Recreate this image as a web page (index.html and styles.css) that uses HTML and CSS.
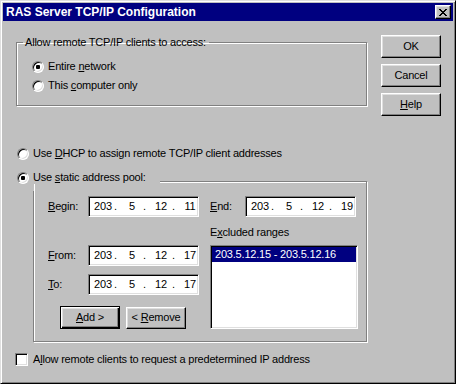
FILE: index.html
```html
<!DOCTYPE html>
<html lang="en">
<head>
    <meta charset="UTF-8">
    <title>RAS Server TCP/IP Configuration</title>
    <link rel="stylesheet" href="styles.css">
</head>
<body>
    <div class="window">
        <div class="titlebar">
            <span class="title">RAS Server TCP/IP Configuration</span>
            <span class="close">
                <svg width="8" height="7" viewBox="0 0 8 7"><path d="M0 0h2v1H0zM6 0h2v1H6zM1 1h2v1H1zM5 1h2v1H5zM2 2h4v1H2zM3 3h2v1H3zM2 4h4v1H2zM1 5h2v1H1zM5 5h2v1H5zM0 6h2v1H0zM6 6h2v1H6z" fill="#000"/></svg>
            </span>
        </div>
        <div class="content">
            <div class="main">
                <fieldset class="group">
                    <legend>Allow remote TCP/IP clients to access:</legend>
                    <label class="option"><span class="radio checked"></span><span>Entire <u>n</u>etwork</span></label>
                    <label class="option second"><span class="radio"></span><span>This <u>c</u>omputer only</span></label>
                </fieldset>

                <label class="option dhcp"><span class="radio"></span><span>Use <u>D</u>HCP to assign remote TCP/IP client addresses</span></label>

                <fieldset class="pool">
                    <legend><label class="option"><span class="radio checked"></span><span>Use <u>s</u>tatic address pool:</span></label></legend>
                    <div class="pool-left">
                        <div class="field-row">
                            <span class="field-label"><u>B</u>egin:</span>
                            <div class="ip"><span class="seg">203</span><span class="dot">.</span><span class="seg">5</span><span class="dot">.</span><span class="seg">12</span><span class="dot">.</span><span class="seg">11</span></div>
                        </div>
                        <div class="field-row from">
                            <span class="field-label"><u>F</u>rom:</span>
                            <div class="ip"><span class="seg">203</span><span class="dot">.</span><span class="seg">5</span><span class="dot">.</span><span class="seg">12</span><span class="dot">.</span><span class="seg">17</span></div>
                        </div>
                        <div class="field-row to">
                            <span class="field-label"><u>T</u>o:</span>
                            <div class="ip"><span class="seg">203</span><span class="dot">.</span><span class="seg">5</span><span class="dot">.</span><span class="seg">12</span><span class="dot">.</span><span class="seg">17</span></div>
                        </div>
                        <div class="pool-buttons">
                            <button class="btn default"><u>A</u>dd &gt;</button>
                            <button class="btn small">&lt; <u>R</u>emove</button>
                        </div>
                    </div>
                    <div class="pool-right">
                        <div class="field-row">
                            <span class="field-label end"><u>E</u>nd:</span>
                            <div class="ip"><span class="seg">203</span><span class="dot">.</span><span class="seg">5</span><span class="dot">.</span><span class="seg">12</span><span class="dot">.</span><span class="seg">19</span></div>
                        </div>
                        <div class="list-label">E<u>x</u>cluded ranges</div>
                        <div class="listbox">
                            <div class="list-item selected">203.5.12.15 - 203.5.12.16</div>
                        </div>
                    </div>
                </fieldset>

                <label class="option check-row"><span class="checkbox"></span><span>A<u>l</u>low remote clients to request a predetermined IP address</span></label>
            </div>
            <div class="buttons">
                <button class="btn">OK</button>
                <button class="btn">Cancel</button>
                <button class="btn"><u>H</u>elp</button>
            </div>
        </div>
    </div>
</body>
</html>
```

FILE: styles.css
```css
body{
    margin: 0;
    background-color: #c0c0c0;
    font-family: "Liberation Sans", Arial, sans-serif;
    font-size: 11px;
    line-height: 13px;
    letter-spacing: -0.2px;
    color: #000;
}

.window{
    width: 456px;
    height: 384px;
    box-sizing: border-box;
    background-color: #c0c0c0;
    border: 1px solid;
    border-color: #dfdfdf #000 #000 #dfdfdf;
    box-shadow: inset 1px 1px #fff, inset -1px -1px #808080;
    padding: 2px;
    display: flex;
    flex-direction: column;
}

.titlebar{
    height: 18px;
    background-color: #000080;
    color: #fff;
    font-weight: bold;
    font-size: 12px;
    letter-spacing: 0;
    display: flex;
    align-items: center;
    justify-content: space-between;
    padding: 0 2px 0 3px;
}

.close{
    width: 16px;
    height: 14px;
    box-sizing: border-box;
    background-color: #c0c0c0;
    border: 1px solid;
    border-color: #fff #000 #000 #fff;
    box-shadow: inset -1px -1px #808080, inset 1px 1px #dfdfdf;
    display: flex;
    align-items: center;
    justify-content: center;
}

.content{
    flex: 1;
    display: flex;
}

.main{
    flex: 1;
    padding-left: 13px;
}

/* group boxes */
fieldset{
    margin: 0;
    box-sizing: border-box;
    border: 1px solid #808080;
    box-shadow: inset 1px 1px #fff, 1px 1px #fff;
}

.group{
    margin-top: 15px;
    width: 351px;
    padding: 11px 0 13px 15px;
}

.group legend{
    margin-left: -9px;
    padding: 0 3px 0 2px;
}

.option{
    display: flex;
    align-items: center;
    gap: 4px;
    height: 13px;
    white-space: nowrap;
}

.option.second{
    margin-top: 6px;
}

.dhcp{
    margin: 41px 0 0 1px;
}

.radio{
    position: relative;
    width: 12px;
    height: 12px;
    box-sizing: border-box;
    border-radius: 50%;
    background-color: #fff;
    border: 1px solid;
    border-color: #808080 #fff #fff #808080;
    box-shadow: inset 1px 1px #000, inset -1px -1px #dfdfdf;
    flex: none;
}

.radio.checked::after{
    content: "";
    position: absolute;
    left: 3px;
    top: 3px;
    width: 4px;
    height: 4px;
    border-radius: 1px;
    background-color: #000;
}

.checkbox{
    width: 13px;
    height: 13px;
    box-sizing: border-box;
    background-color: #fff;
    border: 1px solid;
    border-color: #808080 #fff #fff #808080;
    box-shadow: inset 1px 1px #000, inset -1px -1px #dfdfdf;
    flex: none;
}

.check-row{
    margin: 11px 0 0 -1px;
    gap: 5px;
}

/* static address pool */
.pool{
    margin: 11px 0 0 17px;
    width: 334px;
    padding: 5px 8px 12px 14px;
    display: flex;
    gap: 11px;
}

.pool legend{
    margin-left: -31px;
    padding: 0 0 7px 0;
}

.pool legend .option{
    background-color: #c0c0c0;
    padding-right: 14px;
}

.pool-left, .pool-right{
    display: flex;
    flex-direction: column;
}

.field-row{
    display: flex;
    align-items: center;
}

.field-row.from{
    margin-top: 28px;
}

.field-row.to{
    margin-top: 8px;
}

.field-label{
    width: 40px;
}

.field-label.end{
    width: 35px;
}

.ip{
    width: 111px;
    height: 21px;
    box-sizing: border-box;
    background-color: #fff;
    border: 1px solid;
    border-color: #808080 #fff #fff #808080;
    box-shadow: inset 1px 1px #000, inset -1px -1px #dfdfdf;
    padding-left: 3px;
    display: flex;
    align-items: center;
    overflow: hidden;
}

.seg{
    width: 22px;
    flex: none;
    text-align: center;
}

.dot{
    width: 7px;
    flex: none;
}

.list-label{
    margin-top: 9px;
}

.listbox{
    margin-top: 6px;
    width: 148px;
    height: 84px;
    box-sizing: border-box;
    background-color: #fff;
    border: 1px solid;
    border-color: #808080 #fff #fff #808080;
    box-shadow: inset 1px 1px #000, inset -1px -1px #dfdfdf;
    padding: 1px;
}

.list-item{
    height: 15px;
    line-height: 15px;
    padding-left: 3px;
}

.list-item.selected{
    background-color: #000080;
    color: #fff;
}

.pool-buttons{
    margin: 11px 0 0 12px;
    display: flex;
    align-items: center;
    gap: 6px;
}

/* push buttons */
.btn{
    width: 60px;
    height: 23px;
    box-sizing: border-box;
    padding: 0;
    background-color: #c0c0c0;
    color: #000;
    font: inherit;
    letter-spacing: inherit;
    border: 1px solid;
    border-color: #fff #000 #000 #fff;
    box-shadow: inset -1px -1px #808080, inset 1px 1px #dfdfdf;
}

.btn.small{
    height: 22px;
}

.btn.default{
    border-color: #000;
    box-shadow: inset 1px 1px #fff, inset -1px -1px #000, inset -2px -2px #808080, inset 2px 2px #dfdfdf;
}

.buttons{
    display: flex;
    flex-direction: column;
    gap: 6px;
    padding-top: 14px;
    margin-right: 12px;
}
```
